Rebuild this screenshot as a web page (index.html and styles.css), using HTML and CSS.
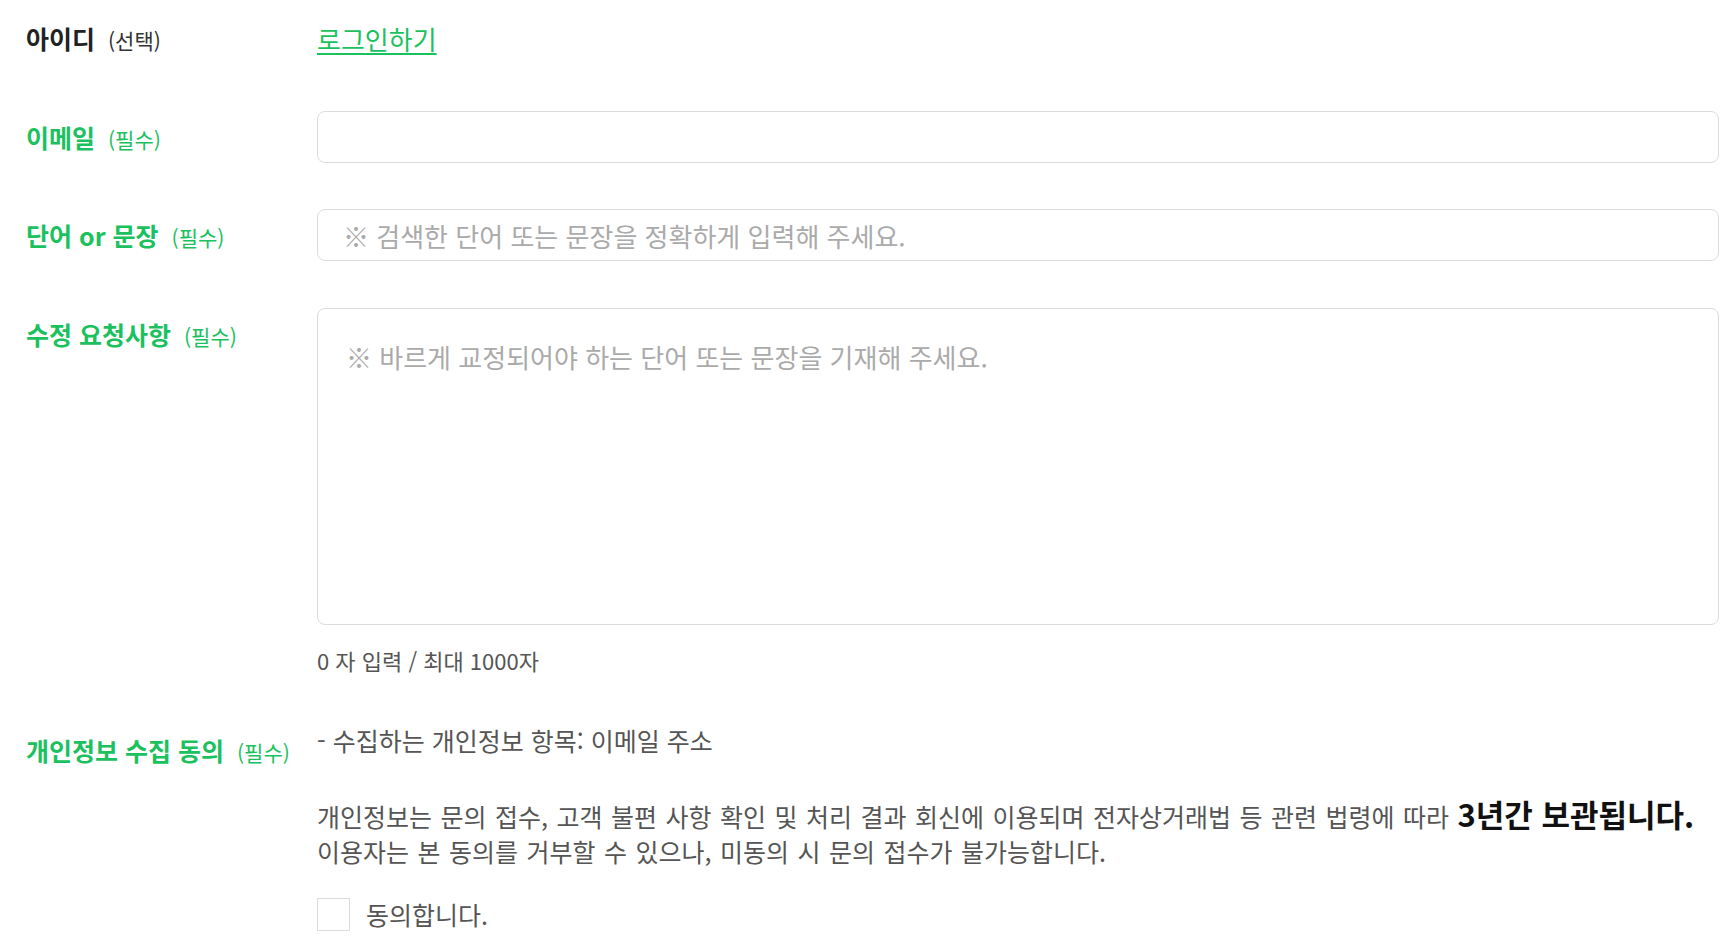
FILE: index.html
```html
<!DOCTYPE html>
<html lang="ko">
<head>
<meta charset="utf-8">
<title>수정 요청</title>
<link rel="stylesheet" href="styles.css">
</head>
<body>
<form class="form">
  <div class="row">
    <div class="label"><span class="name dark">아이디</span><span class="note gray">(선택)</span></div>
    <div class="field center"><a href="#" class="login">로그인하기</a></div>
  </div>
  <div class="row">
    <div class="label"><span class="name">이메일</span><span class="note">(필수)</span></div>
    <div class="field"><input class="input" type="text"></div>
  </div>
  <div class="row">
    <div class="label"><span class="name">단어 or 문장</span><span class="note">(필수)</span></div>
    <div class="field"><input class="input" type="text" placeholder="※ 검색한 단어 또는 문장을 정확하게 입력해 주세요."></div>
  </div>
  <div class="row">
    <div class="label"><span class="name">수정 요청사항</span><span class="note">(필수)</span></div>
    <div class="field">
      <textarea class="textarea" placeholder="※ 바르게 교정되어야 하는 단어 또는 문장을 기재해 주세요."></textarea>
      <div class="counter">0 자 입력 / 최대 1000자</div>
    </div>
  </div>
  <div class="row privacy">
    <div class="label"><span class="name">개인정보 수집 동의</span><span class="note">(필수)</span></div>
    <div class="field">
      <p class="item">- 수집하는 개인정보 항목: 이메일 주소</p>
      <p class="para">개인정보는 문의 접수, 고객 불편 사항 확인 및 처리 결과 회신에 이용되며 전자상거래법 등 관련 법령에 따라 <strong class="strong">3년간 보관됩니다.</strong><br>이용자는 본 동의를 거부할 수 있으나, 미동의 시 문의 접수가 불가능합니다.</p>
      <label class="agree"><span class="box"></span><span class="agree-text">동의합니다.</span></label>
    </div>
  </div>
</form>
</body>
</html>
```

FILE: styles.css
```css
html, body {
  margin: 0;
  padding: 0;
  background: #fff;
}
body {
  font-family: "Noto Sans CJK KR", "Noto Sans", sans-serif;
  color: #555;
}
.form {
  padding: 12px 7px 20px 26px;
  display: flex;
  flex-direction: column;
}
.row {
  display: flex;
  align-items: flex-start;
  margin-bottom: 47px;
}
.row:nth-child(2) { margin-bottom: 46px; }
.row:nth-child(3) { margin-bottom: 47px; }
.row:nth-child(4) { margin-bottom: 50px; }
.label {
  width: 291px;
  flex: none;
  height: 52px;
  display: flex;
  align-items: center;
  gap: 13px;
}
.name {
  font-size: 25px;
  font-weight: 700;
  color: #1bc15e;
}
.name.dark { color: #222; }
.note {
  font-size: 21px;
  color: #1bc15e;
  padding-top: 4px;
}
.note.gray { color: #333; }
.field {
  flex: 1;
  min-width: 0;
}
.field.center {
  height: 52px;
  display: flex;
  align-items: center;
}
.login {
  font-size: 26px;
  color: #1bc15e;
  text-decoration: underline;
  text-underline-offset: 3px;
  text-decoration-thickness: 2px;
}
.input, .textarea {
  display: block;
  width: 100%;
  box-sizing: border-box;
  border: 1px solid #dcdcdc;
  border-radius: 8px;
  font-family: "Noto Sans CJK KR", "Noto Sans", sans-serif;
  font-size: 26px;
  color: #333;
  background: #fff;
  outline: none;
}
.input {
  height: 52px;
  padding: 0 25px;
}
.textarea {
  height: 317px;
  padding: 29px 28px;
  resize: none;
  line-height: 38px;
}
.input::placeholder, .textarea::placeholder {
  color: #aaa;
}
.counter {
  margin-top: 21px;
  font-size: 22px;
  line-height: 28px;
  color: #555;
}
.item {
  margin: 0;
  font-size: 25px;
  line-height: 32px;
  color: #555;
}
.para {
  margin: 40px 0 0;
  font-size: 25px;
  line-height: 35px;
  word-spacing: 1.5px;
  color: #555;
}
.strong {
  font-size: 31px;
  font-weight: 700;
  color: #111;
  word-spacing: 0;
}
.agree {
  margin-top: 27px;
  display: flex;
  align-items: center;
  gap: 16px;
}
.box {
  width: 31px;
  height: 31px;
  border: 1px solid #dcdcdc;
  background: #fff;
  flex: none;
}
.agree-text {
  font-size: 25px;
  color: #555;
}
```
